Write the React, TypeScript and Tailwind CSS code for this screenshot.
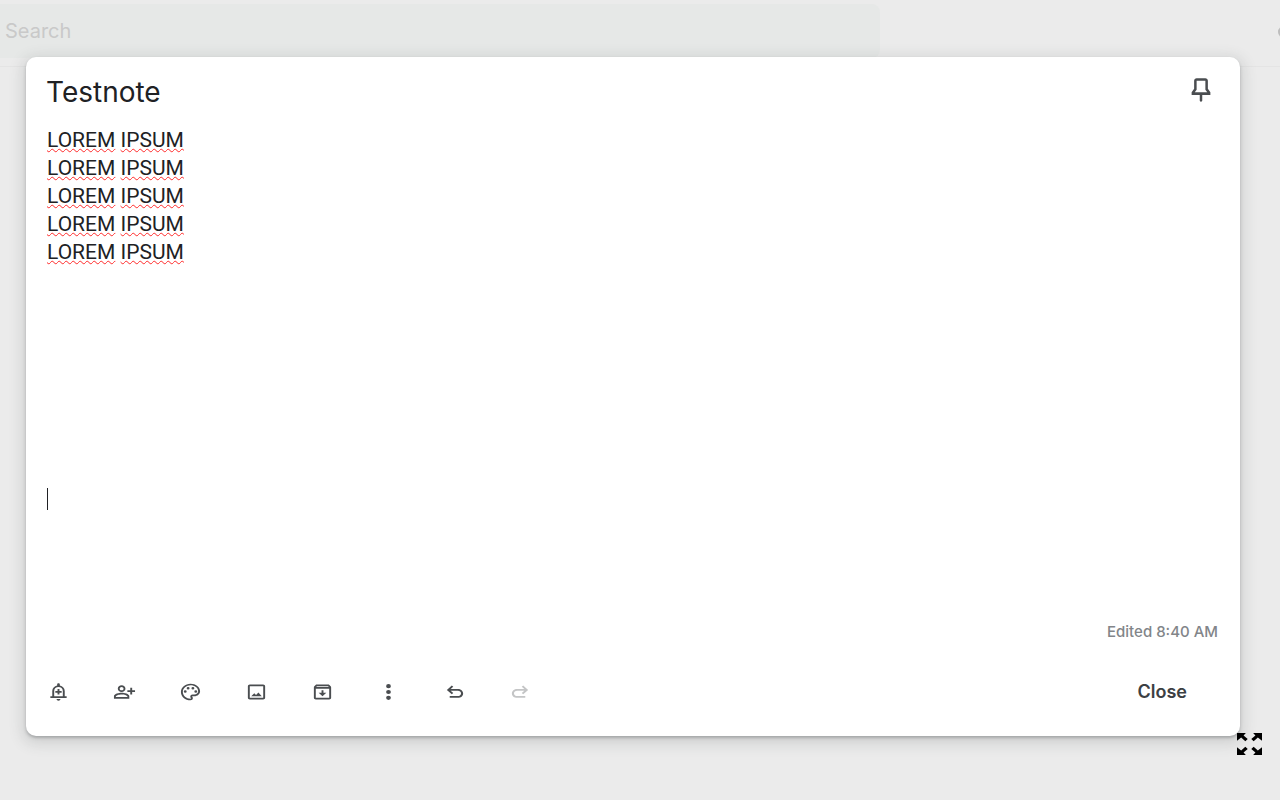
import type { ReactNode } from "react";

const lines = ["LOREM IPSUM", "LOREM IPSUM", "LOREM IPSUM", "LOREM IPSUM", "LOREM IPSUM"];

const tools = [
  {
    label: "Remind me",
    d: "M10 20.500c0 1.100.900 2 2 2s2-.900 2-2zM12 6c2.500 0 4.500 2 4.500 4.700V17h-9v-6.300C7.500 8 9.500 6 12 6m0-4.500c-.8 0-1.400.6-1.400 1.400v1.200C7.700 4.800 5.500 7.500 5.500 10.700V17H3.500v2.200h17V17h-2v-6.300c0-3.200-2.200-5.900-5.100-6.600V2.900c0-.8-.6-1.400-1.400-1.400zM13 8.500h-2v2.300H8.700v2H11v2.300h2v-2.300h2.300v-2H13z",
  },
  {
    label: "Collaborator",
    d: "M9 12c2.21 0 4-1.79 4-4s-1.79-4-4-4-4 1.79-4 4 1.79 4 4 4zm0-6c1.1 0 2 .9 2 2s-.9 2-2 2-2-.9-2-2 .9-2 2-2zm0 7c-2.67 0-8 1.34-8 4v3h16v-3c0-2.66-5.33-4-8-4zm6 5H3v-.99C3.2 16.29 6.3 15 9 15s5.8 1.29 6 2v1zm5-8V7h-2v3h-3v2h3v3h2v-3h3v-2h-3z",
  },
  {
    label: "Background options",
    d: "M12 22C6.49 22 2 17.51 2 12S6.49 2 12 2s10 4.04 10 9c0 3.31-2.69 6-6 6h-1.77c-.28 0-.5.22-.5.5 0 .12.05.23.13.33.41.47.64 1.06.64 1.67A2.5 2.5 0 0112 22zm0-18c-4.41 0-8 3.59-8 8s3.59 8 8 8c.28 0 .5-.22.5-.5a.54.54 0 00-.14-.35c-.41-.46-.63-1.05-.63-1.65a2.5 2.5 0 012.5-2.5H16c2.21 0 4-1.79 4-4 0-3.86-3.59-7-8-7zM6.5 10a1.5 1.5 0 100 3 1.5 1.5 0 000-3zm3-4a1.5 1.5 0 100 3 1.5 1.5 0 000-3zm5 0a1.5 1.5 0 100 3 1.5 1.5 0 000-3zm3 4a1.5 1.5 0 100 3 1.5 1.5 0 000-3z",
  },
  {
    label: "Add image",
    d: "M19 3H5c-1.1 0-2 .9-2 2v14c0 1.1.9 2 2 2h14c1.1 0 2-.9 2-2V5c0-1.1-.9-2-2-2zm0 16H5V5h14v14zM6.5 17h11l-3.5-4.5-2.5 3-1.8-2.1z",
  },
  {
    label: "Archive",
    d: "M20.54 5.23l-1.39-1.68C18.88 3.21 18.47 3 18 3H6c-.47 0-.88.21-1.16.55L3.46 5.23C3.17 5.57 3 6.02 3 6.5V19c0 1.1.9 2 2 2h14c1.1 0 2-.9 2-2V6.5c0-.48-.17-.93-.46-1.27zM6.24 5h11.52l.83 1H5.42l.82-1zM5 19V8h14v11H5zm8-9h-2v3H8l4 4 4-4h-3z",
  },
  {
    label: "More",
    d: "M12 2.500a2.500 2.500 0 100 5 2.500 2.500 0 000-5zm0 7a2.500 2.500 0 100 5 2.500 2.500 0 000-5zm0 7a2.500 2.500 0 100 5 2.500 2.500 0 000-5z",
  },
  {
    label: "Undo",
    d: "M7 19v-2.200h8.500c1.900 0 3.300-1.300 3.300-3.100s-1.400-3.100-3.300-3.100H8l2.700 2.700-1.500 1.500L4 9.500l5.200-5.300 1.500 1.500L8 8.400h7.500c3.100 0 5.500 2.300 5.500 5.300S18.600 19 15.500 19z",
  },
  {
    label: "Redo",
    disabled: true,
    d: "M17 19v-2.200H8.500c-1.900 0-3.300-1.300-3.300-3.100s1.400-3.100 3.300-3.100H16l-2.700 2.700 1.500 1.500L20 9.500l-5.200-5.300-1.500 1.500L16 8.400H8.500C5.400 8.400 3 10.700 3 13.700S5.400 19 8.500 19z",
  },
];

function Icon({ className, children }: { className: string; children: ReactNode }) {
  return (
    <svg viewBox="0 0 24 24" preserveAspectRatio="none" fill="currentColor" className={className} aria-hidden="true">
      {children}
    </svg>
  );
}

export default function App() {
  return (
    <div className="flex min-h-screen flex-col overflow-hidden bg-[#ebebeb] font-['Roboto',sans-serif]">
      <header className="flex h-[67px] items-start justify-between border-b border-[#e4e4e4] pt-1">
        <input
          type="search"
          aria-label="Search"
          placeholder="Search"
          className="h-[54px] w-11/16 rounded-r-lg bg-[#e6e8e7] px-[5px] font-['Inter',sans-serif] text-xl outline-none placeholder:text-[#c9c9c9]"
        />
        <button aria-label="Refresh" className="-mr-[18px] mt-[18px] text-[#bdbdbd]">
          <Icon className="h-5 w-6">
            <path d="M12 4a8 8 0 1 0 8 8h-2.500a5.500 5.500 0 1 1-5.500-5.500z" />
          </Icon>
        </button>
      </header>

      <main
        aria-label="Note"
        className="relative -mt-[10px] mr-10 mb-16 ml-[26px] flex grow flex-col rounded-[10px] bg-white shadow-[0_2px_3px_rgba(60,64,67,0.3),0_4px_14px_4px_rgba(60,64,67,0.15)]"
      >
        <div className="flex items-start justify-between pt-[17px] pr-6 pl-5">
          <input
            aria-label="Title"
            defaultValue="Testnote"
            className="h-9 grow font-['Inter',sans-serif] text-[28px] text-[#202124] outline-none"
          />
          <button aria-label="Pin note" className="mt-[2px] text-[#4a4d50]">
            <Icon className="h-7 w-[30px]">
              <path d="M17.500 4v7l2 3v2.200h-6.500v5l-1 1-1-1v-5H4.500V14l2-3V4c0-1.100.900-2 2-2h7c1.100 0 2 .900 2 2zM8.500 4v7.700L7 14h10l-1.500-2.300V4z" />
            </Icon>
          </button>
        </div>

        <div
          role="textbox"
          aria-multiline="true"
          aria-label="Note text"
          className="grow px-[21px] pt-4 text-[21px] leading-7 text-[#202124]"
        >
          {lines.map((line, i) => (
            <p key={i}>
              {line.split(" ").map((word, j) => (
                <span key={j}>
                  {j > 0 && " "}
                  <span className="underline decoration-[#ff2a2a] decoration-wavy decoration-1 underline-offset-1">{word}</span>
                </span>
              ))}
            </p>
          ))}
          <div className="mt-[222px] h-[22px] w-px bg-[#202124]" />
        </div>

        <p className="pr-[22px] text-right font-['Inter',sans-serif] text-[15px] leading-5 font-medium text-[#828589]">
          Edited 8:40 AM
        </p>

        <div className="flex items-center justify-between pt-[30px] pr-[21px] pb-6 pl-5">
          <div className="flex gap-[42px]">
            {tools.map((tool) => (
              <button
                key={tool.label}
                aria-label={tool.label}
                disabled={tool.disabled}
                className="flex h-10 w-6 items-center justify-center text-[#4a4d50] disabled:text-[#c4c5c6]"
              >
                <Icon className="h-5 w-[23px]">
                  <path d={tool.d} />
                </Icon>
              </button>
            ))}
          </div>
          <button className="px-8 font-['Inter',sans-serif] text-lg font-semibold text-[#3c4043]">Close</button>
        </div>

        <button aria-label="Full screen" className="absolute -right-[22px] -bottom-[19px] text-black">
          <Icon className="h-[22px] w-[25px]">
            <path d="M0 0h8.500L6.300 2.600l4 4-2.300 2.300-4-4L0 8.500zM24 0h-8.500l2.200 2.600-4 4 2.300 2.300 4-4L24 8.500zM0 24h8.500l-2.200-2.600 4-4-2.300-2.300-4 4L0 15.500zM24 24h-8.500l2.200-2.600-4-4 2.300-2.300 4 4L24 15.500z" />
          </Icon>
        </button>
      </main>
    </div>
  );
}
